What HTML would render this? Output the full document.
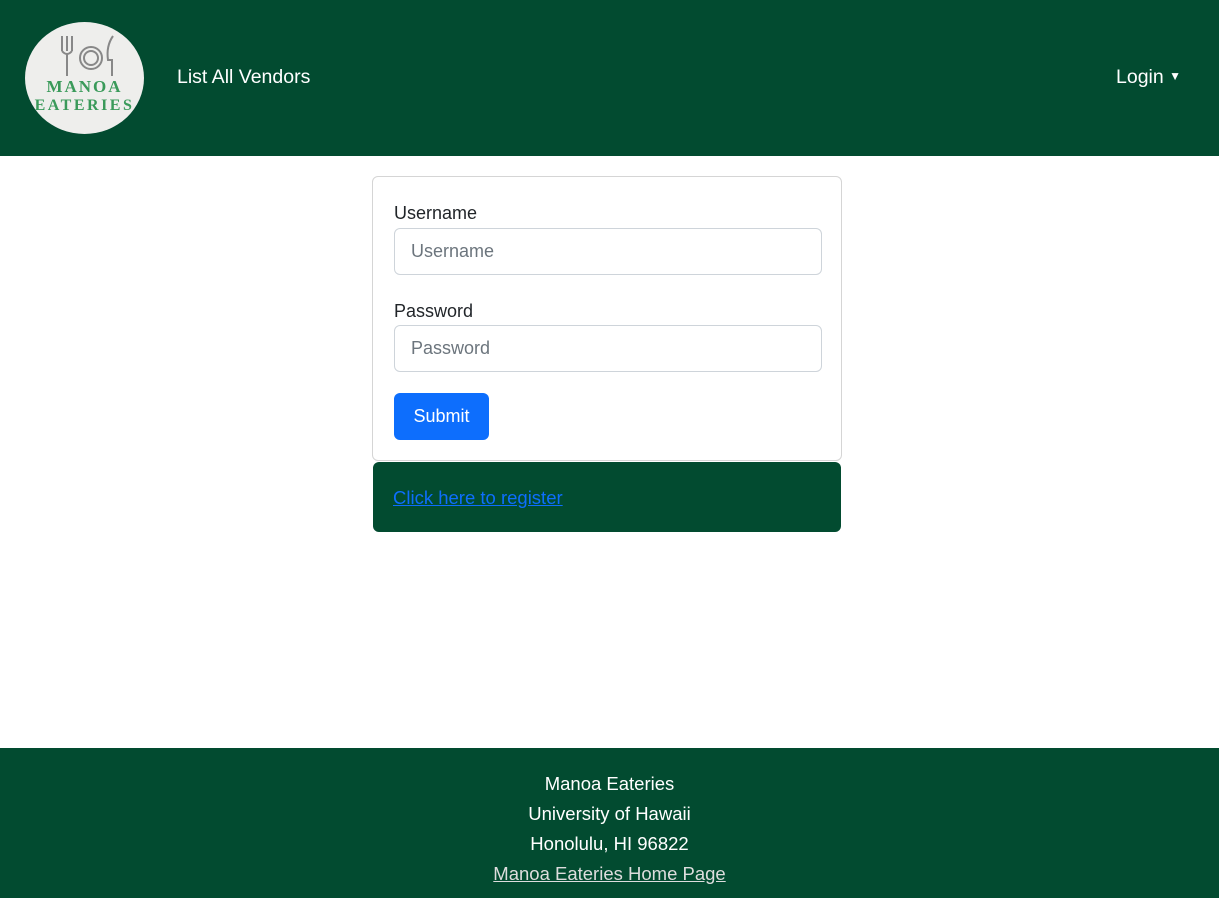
<!DOCTYPE html>
<html><head><meta charset="utf-8"><style>
*{box-sizing:border-box;margin:0;padding:0}
body{width:1219px;height:898px;font-family:"Liberation Sans",sans-serif;background:#fff;position:relative;overflow:hidden;color:#212529}
.nav{position:absolute;left:0;top:0;width:1219px;height:156px;background:#024b30}
.logo{position:absolute;left:25px;top:22px;width:119px;height:112px;border-radius:50%;background:#eeeeec}
.logo .t{position:absolute;width:100%;text-align:center;font-family:"Liberation Serif",serif;font-weight:bold;color:#3a9a5a;letter-spacing:2px}
.nl{position:absolute;color:#fff;font-size:19.5px;top:66px}
.card{position:absolute;left:372px;top:176px;width:470px;height:285px;border:1px solid #d5d5d5;border-radius:6px}
label{position:absolute;left:21px;font-size:18px}
.in{position:absolute;left:21px;width:428px;height:47px;border:1px solid #ced4da;border-radius:6px;font-size:18px;color:#6c757d;padding:12px 16px}
.btn{position:absolute;left:21px;top:216px;width:95px;height:47px;background:#0d6efd;color:#fff;border-radius:6px;font-size:18px;text-align:center;line-height:47px}
.reg{position:absolute;left:373px;top:462px;width:468px;height:70px;background:#024b30;border-radius:6px}
.reg a{position:absolute;left:20px;top:25px;color:#0d6efd;font-size:18.5px}
.foot{position:absolute;left:0;top:748px;width:1219px;height:150px;background:#024b30;color:#fff;text-align:center;font-size:18.5px;line-height:30px;padding-top:21px}
.foot a{color:#ddd}
</style></head><body>
<div class="nav">
 <div class="logo">
  <svg width="119" height="60" style="position:absolute;left:0;top:0" fill="none" stroke="#888" stroke-width="2">
   <path d="M37 14v15M42 14v15M47 14v15M37 29q5 6 10 0M42 32v22"/>
   <circle cx="66" cy="36" r="11"/><circle cx="66" cy="36" r="7"/>
   <path d="M88 14q-7 10-5 24h4v16"/>
  </svg>
  <div class="t" style="top:55px;font-size:17px">MANOA</div>
  <div class="t" style="top:75px;font-size:16px;letter-spacing:2.5px">EATERIES</div>
 </div>
 <div class="nl" style="left:177px">List All Vendors</div>
 <div class="nl" style="left:1116px">Login <span style="font-size:12px;vertical-align:3px">&#9660;</span></div>
</div>
<div class="card">
 <label style="top:26px">Username</label>
 <div class="in" style="top:51px">Username</div>
 <label style="top:124px">Password</label>
 <div class="in" style="top:148px">Password</div>
 <div class="btn">Submit</div>
</div>
<div class="reg"><a href="#">Click here to register</a></div>
<div class="foot">Manoa Eateries<br>University of Hawaii<br>Honolulu, HI 96822<br><a href="#">Manoa Eateries Home Page</a></div>
</body></html>
